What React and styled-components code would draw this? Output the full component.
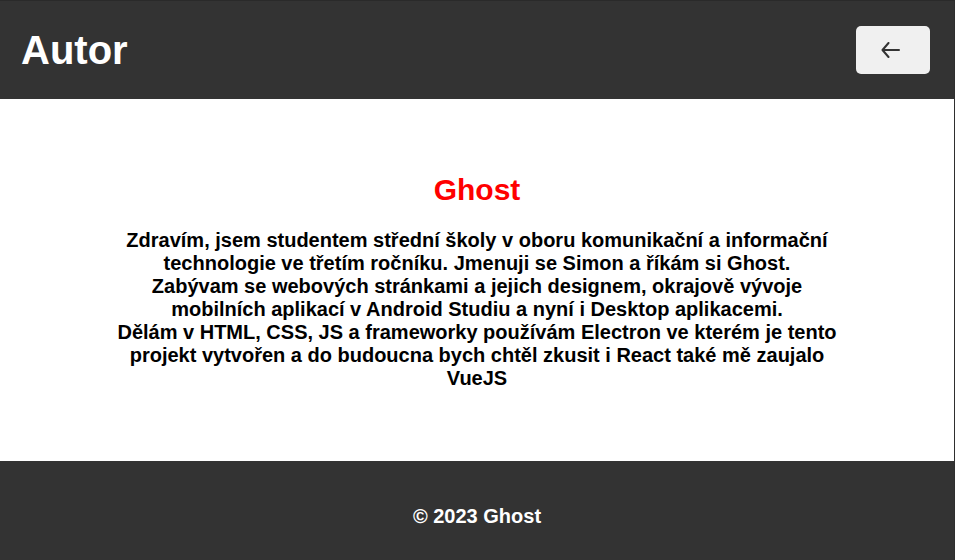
import React from 'react'
import styled, { createGlobalStyle } from 'styled-components'

const aboutText = [
	'Zdravím, jsem studentem střední školy v oboru komunikační a informační technologie ve třetím ročníku. Jmenuji se Simon a říkám si Ghost.',
	'Zabývam se webových stránkami a jejich designem, okrajově vývoje mobilních aplikací v Android Studiu a nyní i Desktop aplikacemi.',
	'Dělám v HTML, CSS, JS a frameworky používám Electron ve kterém je tento projekt vytvořen a do budoucna bych chtěl zkusit i React také mě zaujalo VueJS',
]

export default function App() {
	return (
		<>
			<GlobalStyle />
			<Page>
				{/* top bar */}
				<Header>
					<Title>Autor</Title>
					<BackButton aria-label="Zpět">
						<svg width="20" height="16" viewBox="0 0 20 16" fill="none" stroke="#333" strokeWidth="2" strokeLinecap="round" strokeLinejoin="round">
							<path d="M7.5 1 1.5 8 7.5 15" />
							<path d="M2 8h16" />
						</svg>
					</BackButton>
				</Header>

				{/* about */}
				<Main>
					<Name>Ghost</Name>
					<About>
						{aboutText.map((line, i) => (
							<span key={i}>{line}<br /></span>
						))}
					</About>
				</Main>

				<Footer>© 2023 Ghost</Footer>
			</Page>
		</>
	)
}

const GlobalStyle = createGlobalStyle`
	html, body {
		margin: 0;
		padding: 0;
		height: 100%;
		background: #333;
	}
	body {
		font-family: 'Liberation Sans', Arial, sans-serif;
		border-top: 1px solid #2a2a2a;
		border-right: 1px solid #2e2e2e;
		box-sizing: border-box;
	}
	#root {
		height: 100%;
	}
`

const Page = styled.div`
	display: flex;
	flex-direction: column;
	height: 100%;
`

const Header = styled.header`
	display: flex;
	align-items: center;
	justify-content: space-between;
	height: 98px;
	padding: 0 24px 0 21px;
	background: #333;
	flex-shrink: 0;
`

const Title = styled.h1`
	margin: 0;
	color: #fff;
	font-size: 40px;
	font-weight: 700;
`

const BackButton = styled.button`
	display: flex;
	align-items: center;
	justify-content: center;
	width: 74px;
	height: 48px;
	padding: 0 5px 0 0;
	border: none;
	border-radius: 5px;
	background: #f0f0f0;
	cursor: pointer;
`

const Main = styled.main`
	flex: 1;
	display: flex;
	flex-direction: column;
	align-items: center;
	justify-content: center;
	background: #fff;
	padding: 2px 20px 0;
`

const Name = styled.h2`
	margin: 0 0 22px;
	color: #ff0000;
	font-size: 30px;
	font-weight: 700;
`

const About = styled.p`
	margin: 0;
	max-width: 735px;
	text-align: center;
	color: #000;
	font-size: 20px;
	font-weight: 700;
	line-height: 23px;
`

const Footer = styled.footer`
	display: flex;
	align-items: center;
	justify-content: center;
	height: 99px;
	flex-shrink: 0;
	background: #333;
	color: #fff;
	font-size: 20px;
	font-weight: 700;
	padding-top: 12px;
	box-sizing: border-box;
`
